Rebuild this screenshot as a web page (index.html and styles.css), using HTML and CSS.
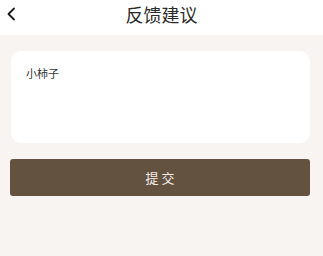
FILE: index.html
```html
<!DOCTYPE html>
<html lang="zh">
<head>
<meta charset="utf-8">
<link rel="stylesheet" href="styles.css">
</head>
<body>
<div class="page">
  <header class="header">
    <span class="back">
      <svg width="10" height="14" viewBox="0 0 10 14"><path d="M8 1.5 L2.5 7 L8 12.5" fill="none" stroke="#1a1a1a" stroke-width="1.8" stroke-linecap="round" stroke-linejoin="round"/></svg>
    </span>
    <h1 class="title">反馈建议</h1>
  </header>
  <main class="content">
    <div class="card">
      <div class="text">小柿子</div>
    </div>
    <button class="submit">提 交</button>
  </main>
</div>
</body>
</html>
```
FILE: styles.css
```css
html, body {
  margin: 0;
  padding: 0;
}
body {
  background: #f8f4f1;
  font-family: "Noto Sans CJK SC", "Noto Sans", sans-serif;
}
.page {
  width: 323px;
  min-height: 256px;
  display: flex;
  flex-direction: column;
}
.header {
  height: 35px;
  background: #ffffff;
  display: flex;
  align-items: center;
  justify-content: center;
  position: relative;
}
.back {
  position: absolute;
  left: 6px;
  top: 7px;
  display: flex;
}
.title {
  margin: 0;
  font-size: 18px;
  font-weight: 400;
  color: #2a2a2a;
  line-height: 28px;
  margin-top: -7px;
}
.content {
  padding: 16px 13px 0 10px;
  display: flex;
  flex-direction: column;
}
.card {
  margin-left: 1px;
  height: 92px;
  background: #ffffff;
  border-radius: 10px;
  padding: 14px 15px;
  box-sizing: border-box;
}
.text {
  font-size: 11px;
  color: #333333;
  line-height: 16px;
}
.submit {
  margin-top: 16px;
  height: 37px;
  width: 300px;
  border: none;
  border-radius: 3px;
  background: #645241;
  color: #f4efe9;
  font-family: inherit;
  font-size: 13px;
  padding: 0;
}
```
